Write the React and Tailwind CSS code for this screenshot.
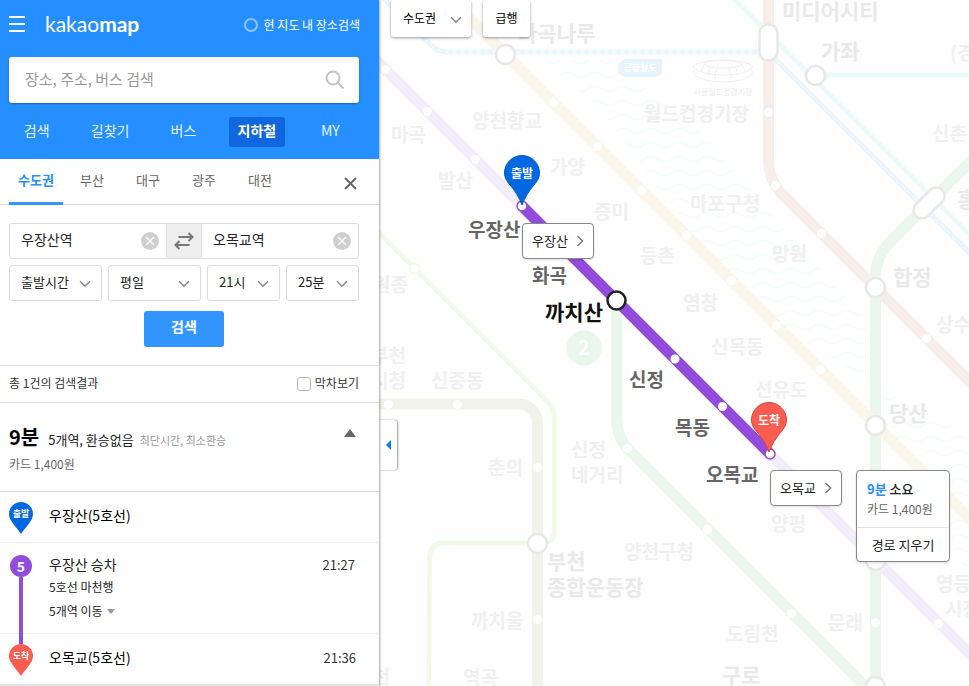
import React from "react";

const REGIONS = ["수도권", "부산", "대구", "광주", "대전"];
const MENU = ["검색", "길찾기", "버스", "지하철", "MY"];

/* ---------- map data ---------- */

const STATION_DOTS = [
  [385, 69], [427, 111], [475, 159], [938, 623],
  [553, 102], [597, 146], [641, 190], [686, 235], [731, 280], [776, 325], [820, 369],
  [768, 112], [775, 185], [821, 233], [926, 338],
  [627, 448], [707, 529], [791, 613], [875, 622],
  [388, 404], [457, 404], [537, 467], [537, 619],
];

const TRANSFERS = [[505, 54], [815, 75], [875, 287], [875, 425], [875, 560], [875, 686], [537, 543]];

const FADED_LABELS = [
  ["마곡", 391, 134], ["양천향교", 472, 120], ["발산", 438, 180], ["가양", 550, 166],
  ["증미", 594, 211], ["월드컵경기장", 644, 113], ["마포구청", 690, 203], ["신촌", 932, 133],
  ["(경의", 950, 52], ["등촌", 640, 255], ["원종", 373, 284], ["망원", 772, 253],
  ["염창", 683, 302], ["신목동", 711, 346], ["선유도", 755, 389], ["상수", 936, 324],
  ["부천", 371, 355], ["시청", 371, 380], ["신중동", 431, 380], ["신정", 571, 449],
  ["네거리", 571, 474], ["춘의", 488, 467], ["까치울", 471, 620], ["역곡", 463, 677],
  ["양평", 771, 523], ["양천구청", 624, 551], ["도림천", 726, 633], ["문래", 828, 622],
  ["영등포", 936, 583], ["시장", 945, 608], ["부천", 355, 676],
];

const TRANSFER_LABELS = [
  ["마곡나루", 518, 33], ["미디어시티", 782, 11], ["가좌", 821, 51], ["홍대입구", 957, 199],
  ["합정", 893, 277], ["당산", 889, 413], ["부천", 547, 561], ["종합운동장", 547, 587], ["구로", 722, 675],
];

const ROUTE_LABELS = [
  ["우장산", 468, 229], ["화곡", 532, 275], ["신정", 629, 379], ["목동", 675, 427], ["오목교", 706, 474],
];

/* ---------- icons ---------- */

function Chevron({ className }) {
  return (
    <svg viewBox="0 0 12 8" className={className} fill="none" stroke="#888" strokeWidth="1.5" aria-hidden="true">
      <path d="M1 1.2 6 6.2 11 1.2" />
    </svg>
  );
}

function ChevronRight() {
  return (
    <svg viewBox="0 0 8 12" className="h-3 w-2" fill="none" stroke="#777" strokeWidth="1.5" aria-hidden="true">
      <path d="M1.5 1 6.5 6 1.5 11" />
    </svg>
  );
}

function MiniPin({ color, label }) {
  return (
    <svg viewBox="0 0 24 32" className="block h-8 w-6" role="img" aria-label={label}>
      <path d="M12 0a12 12 0 0 1 12 12c0 4-2.2 7-4.6 10.2C17 25.400 14.200 28.500 12 32 9.800 28.500 7 25.400 4.600 22.200 2.200 19 0 16 0 12A12 12 0 0 1 12 0Z" fill={color} />
      <text x="12" y="15" textAnchor="middle" fontSize="9" fontWeight="700" fill="#fff">{label}</text>
    </svg>
  );
}

function MapPin({ x, y, color, edge, label }) {
  return (
    <g transform={`translate(${x} ${y})`}>
      <path
        d="M0 0C-3-8-7-14-11.500-19.500-15.500-24-17.500-27.500-17.500-32A17.500 17.500 0 0 1 17.500-32C17.500-27.500 15.500-24 11.500-19.500 7-14 3-8 0 0Z"
        fill={color}
        stroke={edge}
      />
      <text x="0" y="-27" textAnchor="middle" fontSize="12" fontWeight="700" fill="#fff">{label}</text>
    </g>
  );
}

/* ---------- map ---------- */

function Labels({ items, size, fill }) {
  return (
    <g fontSize={size} fontWeight="700" fill={fill}>
      {items.map(([name, x, y]) => (
        <text key={name + x + y} x={x} y={y + 8}>{name}</text>
      ))}
    </g>
  );
}

function SubwayMap() {
  return (
    <svg width="1400" height="900" viewBox="379 0 1400 900" className="block max-w-none" role="img" aria-label="수도권 지하철 노선도">
      <defs>
        <pattern id="waves" width="28" height="14" patternUnits="userSpaceOnUse">
          <path d="M0 5Q7 0 14 5T28 5" fill="none" stroke="#f5fbfd" strokeWidth="1.500" />
        </pattern>
      </defs>
      <path d="M545 60H610L700 130 760 200 866 320V380L960 430 1010 520 1000 620 960 560 866 380 740 300 690 230 600 110Z" fill="url(#waves)" />

      <g fill="none">
        <path d="M379-6 432 46Q438 52 446 52H768L1000 283" stroke="#e9f5fd" strokeWidth="5" />
        <path d="M379-6 432 46Q438 52 446 52H768L1000 283" stroke="#fbfeff" strokeWidth="1" strokeDasharray="5 3" />
        <path d="M731-4 1000 265M815 75H1100" stroke="#edfafa" strokeWidth="5" />
        <path d="M768.500 0V160Q768.500 178 780 192L1000 412" stroke="#f8eee9" strokeWidth="11" />
        <path d="M1000 132 893 239Q875.500 256 875.500 276V700M616.500 301V418Q616.500 437 630 451L880 701" stroke="#ebf7ed" strokeWidth="11" />
        <path d="M441-10 1000 549" stroke="#fbf6ea" strokeWidth="11" />
        <path d="M375 59 522 206M770 454 1000 684" stroke="#f2edfb" strokeWidth="11" />
        <path d="M375 229 547 401Q554.500 409 554.500 420V530Q554.500 543 540 543H443Q429.500 543 429.500 560L428.500 700" stroke="#f3f9e9" strokeWidth="5" />
        <path d="M375 404H520Q526 404 531.500 409.500 537.500 415 537.500 422V700" stroke="#f1f2e9" strokeWidth="11" />
      </g>

      <g fill="#fff">
        {STATION_DOTS.map(([x, y]) => <circle key={`${x}-${y}`} cx={x + 0.5} cy={y + 0.5} r="4.500" />)}
      </g>
      <circle cx="414.500" cy="268.500" r="5" fill="#fff" stroke="#f3f9e9" strokeWidth="2" />

      <g fill="#fff" stroke="#e8e8e8" strokeWidth="2.500">
        {TRANSFERS.map(([x, y]) => <circle key={`${x}-${y}`} cx={x + 0.5} cy={y + 0.5} r="9.500" />)}
        <rect x="759.500" y="24.500" width="18" height="36" rx="8.500" />
        <rect x="-18.500" y="-8.500" width="37" height="17" rx="8.500" transform="translate(929 203) rotate(-45)" />
      </g>

      <path d="M625 59H662V70Q662 77 654 77H627Q618 77 618 68 618 62 625 59Z" fill="#e6f4fd" />
      <text x="640" y="71" textAnchor="middle" fontSize="9" fontWeight="700" fill="#fff">공항철도</text>

      <g fill="none" stroke="#efefef">
        <ellipse cx="723" cy="64" rx="19" ry="4" />
        <path d="M693 67Q698 60 723 60.500 748 60 753 67 746 75 723 75 700 75 693 67ZM694 70V74Q702 82 723 82 744 82 752 74V69M704 65 701 71M710 68 708 75M717 69 715 75M729 69 731 75M736 68 738 75M742 65 745 71M715 75V79M731 75V79" />
      </g>
      <text x="723" y="95" textAnchor="middle" fontSize="8" fill="#ebebeb">서울월드컵경기장</text>

      <circle cx="584" cy="348" r="17.500" fill="#e9f6eb" />
      <text x="584" y="355" textAnchor="middle" fontSize="20" fontWeight="700" fill="#fff">2</text>

      <Labels items={FADED_LABELS} size={19} fill="#f0f0f0" />
      <Labels items={TRANSFER_LABELS} size={21} fill="#e9e9e9" />

      <path d="M522 206 770 454" stroke="#934bdb" strokeWidth="11" />
      <circle cx="522" cy="206" r="5" fill="#fff" stroke="#934bdb" strokeWidth="1.500" />
      <circle cx="770" cy="454" r="5" fill="#fff" stroke="#934bdb" strokeWidth="1.500" />
      <circle cx="675" cy="359" r="4.500" fill="#fff" />
      <circle cx="722.500" cy="406.500" r="4.500" fill="#fff" />
      <circle cx="616.500" cy="300.500" r="9" fill="#fff" stroke="#222" strokeWidth="2.500" />

      <Labels items={ROUTE_LABELS} size={19} fill="#666" />
      <Labels items={[["까치산", 545, 312]]} size={21} fill="#111" />

      <MapPin x={522} y={205} color="#0068e1" edge="#0a58b8" label="출발" />
      <MapPin x={769} y={452} color="#fb5c50" edge="#c9473d" label="도착" />
    </svg>
  );
}

function StationTag({ name, className }) {
  return (
    <button type="button" className={`absolute flex h-9 items-center gap-2 rounded-sm border border-[#888] bg-white px-[9px] text-[13px] text-[#222] shadow ${className}`}>
      {name}
      <ChevronRight />
    </button>
  );
}

function MapArea() {
  return (
    <main className="relative min-w-0 flex-1 overflow-hidden bg-[#fefefe]">
      <SubwayMap />

      <div className="absolute left-3 top-0 flex gap-3">
        <label className="relative block">
          <span className="sr-only">노선도 지역</span>
          <select className="h-[37px] w-20 appearance-none rounded-[3px] bg-white pb-0.5 pl-3 text-xs text-black shadow-[0_1px_3px_rgba(0,0,0,0.4)]">
            <option>수도권</option>
          </select>
          <Chevron className="pointer-events-none absolute right-[9px] top-4 h-2 w-3" />
        </label>
        <button type="button" className="h-[37px] w-[47px] rounded-[3px] bg-white pb-0.5 text-xs text-black shadow-[0_1px_3px_rgba(0,0,0,0.4)]">급행</button>
      </div>

      <StationTag name="우장산" className="left-[143px] top-[223px]" />
      <StationTag name="오목교" className="left-[391px] top-[470px]" />

      <div className="absolute left-[477px] top-[470px] w-[94px] rounded-sm border border-[#888] bg-white shadow">
        <div className="px-[10px] pb-2 pt-2 leading-5">
          <p className="text-[13px] font-medium text-[#222]"><em className="font-bold not-italic text-[#258fff]">9분</em> 소요</p>
          <p className="whitespace-nowrap text-xs leading-5 text-[#666]">카드 1,400원</p>
        </div>
        <button type="button" className="block h-[34px] w-full border-t border-[#e4e4e4] text-[13px] text-[#222]">경로 지우기</button>
      </div>

      <button type="button" aria-label="패널 접기" className="absolute left-0 top-[420px] flex h-[50px] w-[18px] items-center justify-center rounded-r-[3px] bg-white shadow-[1px_0_2px_rgba(0,0,0,0.4)]">
        <svg viewBox="0 0 5 10" className="h-[10px] w-[5px]" fill="#0080ff" aria-hidden="true"><path d="M5 0V10L0 5Z" /></svg>
      </button>
    </main>
  );
}

/* ---------- side panel ---------- */

function Header() {
  return (
    <header className="bg-[#258fff] pb-3 text-white">
      <div className="flex h-12 items-center pl-[9px] pr-[19px]">
        <button type="button" aria-label="메뉴" className="flex w-4 flex-col gap-[5px]">
          <span className="h-0.5 bg-white" />
          <span className="h-0.5 bg-white" />
          <span className="h-0.5 bg-white" />
        </button>
        <h1 className="ml-5 font-[Lato] text-[21px] leading-6">
          <a href="#home">kakao<b className="font-bold">map</b></a>
        </h1>
        <button type="button" className="ml-auto flex items-center gap-1.5 pt-0.5 text-xs">
          <span className="size-3.5 rounded-full border-2 border-[#8cc4ff]" />
          현 지도 내 장소검색
        </button>
      </div>
      <form className="ml-[9px] mr-5 mt-[9px] flex h-[46px] items-center rounded-[3px] bg-white pr-3.5 shadow-[0_1px_2px_rgba(0,0,0,0.3)]">
        <input type="text" aria-label="장소, 주소, 버스 검색" placeholder="장소, 주소, 버스 검색" className="h-full min-w-0 flex-1 bg-transparent pb-1 pl-4 text-[15px] text-[#333] outline-none placeholder:text-[#999]" />
        <button type="button" aria-label="검색">
          <svg viewBox="0 0 20 20" className="size-5" fill="none" stroke="#c4c4c4" strokeWidth="2" aria-hidden="true">
            <circle cx="8" cy="8" r="6.500" />
            <path d="m12.800 12.800 5.700 5.700" />
          </svg>
        </button>
      </form>
      <nav className="mr-3 mt-3.5 grid grid-cols-5 justify-items-center">
        {MENU.map((item) => (
          <a key={item} href="#menu" className={item === "지하철" ? "flex h-[30px] w-14 items-center justify-center rounded-[3px] bg-[#1066df] pb-1 text-sm font-bold" : "flex h-[30px] w-14 items-center justify-center pb-1 text-sm text-[#e8f3ff]"}>
            {item}
          </a>
        ))}
      </nav>
    </header>
  );
}

function RegionTabs() {
  return (
    <div className="flex h-[46px] border-b border-[#ddd] pl-[9px] pr-[22px]">
      <div className="flex gap-0.5">
        {REGIONS.map((name, i) => (
          <button key={name} type="button" className={i === 0 ? "-mb-px w-[54px] border-b-[3px] border-[#3396ff] pb-0.5 text-[13px] font-bold text-[#258fff]" : "-mb-px w-[54px] border-b-[3px] border-transparent pb-0.5 text-[13px] text-[#666]"}>
            {name}
          </button>
        ))}
      </div>
      <button type="button" aria-label="닫기" className="ml-auto mt-1">
        <svg viewBox="0 0 13 13" className="size-[13px]" fill="none" stroke="#666" strokeWidth="2" aria-hidden="true"><path d="m1 1 11 11M12 1 1 12" /></svg>
      </button>
    </div>
  );
}

function StationInput({ label, value }) {
  return (
    <div className="flex min-w-0 flex-1 items-center pr-[7px]">
      <input type="text" aria-label={label} defaultValue={value} className="h-full min-w-0 flex-1 pb-1 pl-[11px] text-sm text-[#222] outline-none" />
      <button type="button" aria-label={`${label} 지우기`}>
        <svg viewBox="0 0 18 18" className="size-[18px]" aria-hidden="true">
          <circle cx="9" cy="9" r="9" fill="#cfcfcf" />
          <path d="m5 5 8 8M13 5l-8 8" stroke="#fff" strokeWidth="1.200" />
        </svg>
      </button>
    </div>
  );
}

function OptionSelect({ label, value, className }) {
  return (
    <label className={`relative block min-w-0 ${className}`}>
      <span className="sr-only">{label}</span>
      <select className="h-9 w-full appearance-none rounded-[3px] border border-[#ddd] bg-white pb-0.5 pl-[11px] text-[13px] text-[#222]">
        <option>{value}</option>
      </select>
      <Chevron className="pointer-events-none absolute right-[11px] top-[15px] h-2 w-3" />
    </label>
  );
}

function SearchForm() {
  return (
    <form className="border-b border-[#ddd] pb-[18px] pl-[9px] pr-5 pt-[18px]">
      <div className="flex h-9 overflow-hidden rounded-[3px] border border-[#ddd]">
        <StationInput label="출발역" value="우장산역" />
        <button type="button" aria-label="출발 도착 바꾸기" className="flex w-9 items-center justify-center border-x border-[#ddd] bg-[#eee]">
          <svg viewBox="0 0 20 18" className="h-[18px] w-5" fill="none" stroke="#777" strokeWidth="2" aria-hidden="true">
            <path d="M4.500 5H18M14.500 1 18.500 5 14.500 9M15.500 13H2M5.500 9 1.500 13 5.500 17" />
          </svg>
        </button>
        <StationInput label="도착역" value="오목교역" />
      </div>
      <div className="mt-1.5 flex gap-1.5">
        <OptionSelect label="시간 기준" value="출발시간" className="flex-[93]" />
        <OptionSelect label="요일" value="평일" className="flex-[93]" />
        <OptionSelect label="시" value="21시" className="flex-[73]" />
        <OptionSelect label="분" value="25분" className="flex-[73]" />
      </div>
      <button type="button" className="mx-auto mt-[10px] block h-9 w-20 rounded-[3px] bg-[#3396ff] pb-1.5 text-sm font-bold text-white">검색</button>
    </form>
  );
}

function RouteResult() {
  return (
    <section>
      <div className="flex h-[37px] items-center justify-between border-b border-[#ddd] pl-[9px] pr-5 text-xs text-[#333]">
        <p className="pb-0.5">총 1건의 검색결과</p>
        <label className="flex items-center gap-1">
          <input type="checkbox" className="size-3.5 appearance-none rounded-[3px] border border-[#bbb] bg-white" />
          <span className="pb-0.5">막차보기</span>
        </label>
      </div>

      <div className="flex h-[89px] justify-between border-b border-[#ddd] pl-[9px] pr-[23px] pt-5">
        <div>
          <p className="flex items-baseline leading-7">
            <strong className="text-xl font-bold leading-7 text-black">9분</strong>
            <span className="ml-[9px] text-[13px] text-[#222]">5개역, 환승없음</span>
            <span className="ml-1.5 text-[11px] text-[#999]">최단시간, 최소환승</span>
          </p>
          <p className="text-xs leading-5 text-[#666]">카드 1,400원</p>
        </div>
        <button type="button" aria-label="접기" className="mt-1.5 self-start">
          <svg viewBox="0 0 12 8" className="block h-2 w-3" fill="#666" aria-hidden="true"><path d="M6 0 12 8H0Z" /></svg>
        </button>
      </div>

      <ol>
        <li className="flex h-[51px] border-b border-[#eee] pl-[9px] pr-[23px]">
          <div className="w-10 pt-[10px]"><MiniPin color="#0068e1" label="출발" /></div>
          <p className="flex items-center pb-1 text-sm text-black">우장산(5호선)</p>
        </li>
        <li className="flex h-[91px] border-b border-[#eee] pl-[9px] pr-6">
          <div className="w-10 pt-3">
            <div className="-mb-px flex h-[79px] w-6 flex-col items-center">
              <span className="flex size-[22px] shrink-0 items-center justify-center rounded-full bg-[#934bdb] text-sm font-bold text-white">5</span>
              <span className="w-1 flex-1 bg-[#934bdb]" />
            </div>
          </div>
          <div className="flex-1 pt-[10px] text-xs text-[#222]">
            <p className="text-sm leading-[22px]">우장산 승차</p>
            <p className="leading-6">5호선 마천행</p>
            <button type="button" className="flex items-center gap-1 leading-6">
              5개역 이동
              <svg viewBox="0 0 8 5" className="h-[5px] w-2" fill="#999" aria-hidden="true"><path d="M0 0H8L4 5Z" /></svg>
            </button>
          </div>
          <time className="pt-[11px] text-[13px] leading-[22px] text-[#333]">21:27</time>
        </li>
        <li className="flex h-[52px] border-b-2 border-[#e4e4e4] pl-[9px] pr-[23px]">
          <div className="w-10">
            <div className="mx-[10px] h-[10px] w-1 bg-[#934bdb]" />
            <MiniPin color="#fb5c50" label="도착" />
          </div>
          <p className="flex flex-1 items-center pb-1 text-sm text-black">오목교(5호선)</p>
          <time className="self-center pb-0.5 text-[13px] text-[#333]">21:36</time>
        </li>
      </ol>
    </section>
  );
}

export default function App() {
  return (
    <div className="flex h-screen overflow-hidden bg-white font-['Noto_Sans_CJK_KR',sans-serif]">
      <aside className="relative z-10 w-[379px] shrink-0 bg-white shadow-[1px_0_2px_rgba(0,0,0,0.35)]">
        <Header />
        <RegionTabs />
        <SearchForm />
        <RouteResult />
      </aside>
      <MapArea />
    </div>
  );
}
